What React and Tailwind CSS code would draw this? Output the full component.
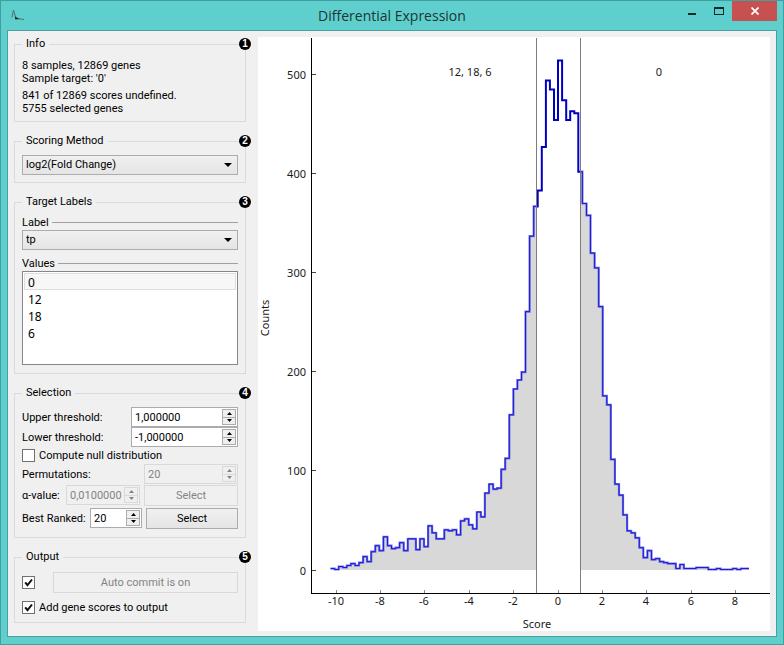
import { useState } from "react";

// Histogram counts, one entry per bin
const COUNTS = [
  2, 1, 4, 3, 5, 7, 5, 8, 14, 9, 19, 25, 20, 34, 25, 22, 23, 28, 20, 32, 32, 21, 32, 24, 45, 38, 32, 32, 41, 40, 41, 36,
  50, 52, 46, 42, 59, 54, 78, 87, 82, 83, 102, 113, 157, 183, 192, 200, 261, 337, 367, 383, 427, 494, 485, 454, 514, 474,
  454, 463, 461, 402, 370, 358, 320, 305, 266, 176, 167, 112, 87, 76, 56, 40, 38, 33, 23, 13, 20, 11, 12, 9, 8, 7, 7, 2,
  6, 2, 2, 2, 3, 3, 3, 1, 1, 2, 1, 1, 1, 2, 1, 2, 2,
];

const BIN_START = -10.28;
const BIN_WIDTH = 0.1832;

const scaleX = (v) => 300.5 + v * 22.17;
const scaleY = (v) => 533.5 - v * 0.992;

function stepPath() {
  return COUNTS.map((count, i) => {
    const left = scaleX(BIN_START + i * BIN_WIDTH).toFixed(1);
    const right = scaleX(BIN_START + (i + 1) * BIN_WIDTH).toFixed(1);
    const y = scaleY(count).toFixed(1);
    return `${i === 0 ? "M" : "L"}${left} ${y}L${right} ${y}`;
  }).join("");
}

function Histogram({ lower, upper }) {
  const line = stepPath();
  const first = scaleX(BIN_START);
  const last = scaleX(BIN_START + COUNTS.length * BIN_WIDTH);
  const area = `${line}L${last} 533L${first} 533Z`;
  const lowerX = Math.floor(scaleX(lower)) + 0.5;
  const upperX = Math.floor(scaleX(upper)) + 0.5;

  return (
    <svg viewBox="0 0 512 594" className="block h-full w-full" role="img" aria-label="Score histogram">
      <defs>
        <clipPath id="tails">
          <rect x="0" y="0" width={lowerX} height="594" />
          <rect x={upperX} y="0" width={512 - upperX} height="594" />
        </clipPath>
        <clipPath id="middle">
          <rect x={lowerX} y="0" width={upperX - lowerX} height="594" />
        </clipPath>
      </defs>

      <path d={area} fill="#d8d8d8" clipPath="url(#tails)" />
      <g fill="none" clipPath="url(#tails)">
        <path d={line} stroke="#7070f0" strokeWidth="2.2" />
        <path d={line} stroke="#1c1cc8" strokeWidth="1" />
      </g>
      <path d={line} fill="none" stroke="#0000c0" strokeWidth="2" clipPath="url(#middle)" />

      {/* Threshold markers */}
      <path d={`M${lowerX} 1V556M${upperX} 1V556`} stroke="#7d7d7d" />

      {/* Axes */}
      <path d="M53.5 1V557M53 556.5H512" stroke="#000" fill="none" />

      <g fontSize="11" fill="#1a1a1a">
        {[0, 100, 200, 300, 400, 500].map((v) => (
          <g key={v}>
            <path d={`M54 ${Math.round(scaleY(v)) - 0.5}h4`} stroke="#444" />
            <text x="48" y={Math.round(scaleY(v)) + 4} textAnchor="end">
              {v}
            </text>
          </g>
        ))}
        {[-10, -8, -6, -4, -2, 0, 2, 4, 6, 8].map((v) => (
          <g key={v}>
            <path d={`M${Math.round(scaleX(v)) - 0.5} 553v3`} stroke="#888" />
            <text x={Math.round(scaleX(v)) - 1} y="568" textAnchor="middle">
              {v}
            </text>
          </g>
        ))}
        <text x="212" y="39" textAnchor="middle">12, 18, 6</text>
        <text x="401" y="39" textAnchor="middle">0</text>
        <text x="279" y="591" textAnchor="middle">Score</text>
        <text transform="translate(11 281) rotate(-90)" textAnchor="middle">Counts</text>
      </g>
    </svg>
  );
}

function Group({ title, number, className, children }) {
  return (
    <div className="relative">
      <fieldset className={`min-w-0 border border-[#dadada] px-[7px] ${className}`}>
        <legend className="px-1 leading-4">{title}</legend>
        {children}
      </fieldset>
      <span className="absolute -right-[5px] top-[2px] flex size-3 items-center justify-center rounded-full bg-black font-['Liberation_Sans'] text-[10px] font-bold leading-3 text-white">
        {number}
      </span>
    </div>
  );
}

function Combo({ label, options }) {
  return (
    <div className="relative">
      <select
        aria-label={label}
        className="block h-5 w-full appearance-none border border-[#acacac] bg-linear-to-b from-[#f0f0f0] to-[#e5e5e5] pl-[3px] leading-4"
      >
        {options.map((o) => (
          <option key={o}>{o}</option>
        ))}
      </select>
      <svg viewBox="0 0 8 4" className="pointer-events-none absolute right-[6px] top-2 h-1 w-2">
        <path d="M0 0h8L4 4z" />
      </svg>
    </div>
  );
}

function SpinBox({ id, label, defaultValue, disabled, className }) {
  return (
    <div
      className={`flex h-5 border p-px ${
        disabled ? "border-[#d9d9d9] text-[#838383]" : "border-[#acacac] bg-white"
      } ${className}`}
    >
      <input
        id={id}
        aria-label={label}
        defaultValue={defaultValue}
        disabled={disabled}
        className="min-w-0 flex-1 bg-transparent pl-[2px] outline-none"
      />
      <div className="flex w-[14px] flex-col">
        <button
          type="button"
          aria-label="Increase"
          disabled={disabled}
          className={`flex flex-1 items-center justify-center border bg-[#efefef] ${disabled ? "border-[#d9d9d9]" : "border-[#acacac]"}`}
        >
          <svg viewBox="0 0 5 3" className="h-[3px] w-[5px] fill-current">
            <path d="M0 3h5L2.500 0z" />
          </svg>
        </button>
        <button
          type="button"
          aria-label="Decrease"
          disabled={disabled}
          className={`flex flex-1 items-center justify-center border border-t-0 bg-[#efefef] ${disabled ? "border-[#d9d9d9]" : "border-[#acacac]"}`}
        >
          <svg viewBox="0 0 5 3" className="h-[3px] w-[5px] fill-current">
            <path d="M0 0h5L2.500 3z" />
          </svg>
        </button>
      </div>
    </div>
  );
}

function CheckBox({ label, ariaLabel, defaultChecked }) {
  return (
    <label className="flex h-[13px] items-center gap-1 whitespace-nowrap">
      <span className="relative size-[13px] shrink-0">
        <input
          type="checkbox"
          aria-label={ariaLabel}
          defaultChecked={defaultChecked}
          className="peer block size-[13px] appearance-none border border-[#707070] bg-white"
        />
        <svg viewBox="0 0 13 13" className="pointer-events-none absolute inset-0 hidden size-[13px] peer-checked:block">
          <path d="M3.200 6.300L5.500 9.200L10 3.500" fill="none" stroke="#111" strokeWidth="2" />
        </svg>
      </span>
      {label}
    </label>
  );
}

function PushButton({ disabled, className, children }) {
  return (
    <button
      type="button"
      disabled={disabled}
      className={`h-[21px] border ${
        disabled ? "border-[#d9d9d9] text-[#838383]" : "border-[#acacac] bg-linear-to-b from-[#f0f0f0] to-[#e5e5e5]"
      } ${className}`}
    >
      {children}
    </button>
  );
}

function HeaderLine({ children }) {
  return (
    <div className="mb-px flex h-[13px] items-center gap-[3px] leading-[13px]">
      {children}
      <span className="h-px flex-1 bg-[#a0a0a0]" />
    </div>
  );
}

function TitleBar() {
  return (
    <header className="relative flex h-[29px] items-start justify-between">
      <svg viewBox="0 0 14 12" className="ml-1 mt-2 h-3 w-[14px]" fill="none">
        <path d="M1 8.500L2.500 1L4.500 8L6.500 9.500L13 10.500" stroke="#4b7372" />
        <path d="M3.800 7.500L4.300 10.500L8.500 10z" fill="#222" />
      </svg>
      <h1 className="pointer-events-none absolute inset-x-0 top-1 text-center font-['Open_Sans'] text-[14px] leading-[22px] text-[#1d3535]">
        Differential Expression
      </h1>
      <div className="flex">
        <button type="button" aria-label="Minimize" className="flex h-5 w-[27px] items-center justify-center">
          <svg viewBox="0 0 10 10" className="size-[10px]">
            <path d="M1 7h8v2H1z" fill="#0e2a2a" />
          </svg>
        </button>
        <button type="button" aria-label="Maximize" className="flex h-5 w-[27px] items-center justify-center">
          <svg viewBox="0 0 10 10" className="size-[10px]">
            <path d="M0 1h10v8H0zM1 3v5h8V3z" fill="#0e2a2a" fillRule="evenodd" />
          </svg>
        </button>
        <button type="button" aria-label="Close" className="flex h-5 w-[45px] items-center justify-center bg-[#c75050]">
          <svg viewBox="0 0 8 8" className="size-2">
            <path d="M0.500 0.500L7.500 7.500M7.500 0.500L0.500 7.500" stroke="#fff" strokeWidth="1.700" />
          </svg>
        </button>
      </div>
    </header>
  );
}

export default function App() {
  const [thresholds] = useState({ lower: -1, upper: 1 });

  return (
    <div className="flex min-h-screen flex-col border border-[#3fa09f] bg-[#5ecfcd] px-[6px] pb-[7px] text-[11px] leading-[13px] text-black">
      <TitleBar />

      <main className="flex flex-1 border border-[#4b9f9e] bg-[#f0f0f0] px-[6px] py-[5px]">
        <aside className="flex w-[232px] shrink-0 flex-col gap-[11px] font-['Roboto',sans-serif]">
          <Group title="Info" number="1" className="pb-[6px]">
            <div className="mt-[7px]">
              <p>8 samples, 12869 genes</p>
              <p>Sample target: '0'</p>
            </div>
            <div className="mt-1">
              <p>841 of 12869 scores undefined.</p>
              <p>5755 selected genes</p>
            </div>
          </Group>

          <Group title="Scoring Method" number="2" className="pb-[7px]">
            <div className="mt-[6px]">
              <Combo label="Scoring Method" options={["log2(Fold Change)"]} />
            </div>
          </Group>

          <Group title="Target Labels" number="3" className="pb-2">
            <div className="mt-[6px]">
              <HeaderLine>Label</HeaderLine>
              <Combo label="Label" options={["tp"]} />
            </div>
            <div className="mt-[7px]">
              <HeaderLine>Values</HeaderLine>
              <select
                size={5}
                aria-label="Values"
                className="block h-[94px] w-full appearance-none overflow-hidden border border-[#828790] bg-white p-px font-['Noto_Sans',sans-serif] text-[12px]"
              >
                {["0", "12", "18", "6"].map((v) => (
                  <option
                    key={v}
                    className="h-[17px] min-h-0 border border-transparent px-[3px] py-0 leading-[14px] first:border-[#dedede] first:bg-[#f7f7f7]"
                  >
                    {v}
                  </option>
                ))}
              </select>
            </div>
          </Group>

          <Group title="Selection" number="4" className="pb-2">
            <div className="mt-[6px] flex items-center justify-between">
              <label htmlFor="upper">Upper threshold:</label>
              <SpinBox id="upper" defaultValue="1,000000" className="w-[107px]" />
            </div>
            <div className="flex items-center justify-between">
              <label htmlFor="lower">Lower threshold:</label>
              <SpinBox id="lower" defaultValue="-1,000000" className="w-[107px]" />
            </div>
            <div className="my-[2px]">
              <CheckBox label="Compute null distribution" />
            </div>
            <div className="flex items-center justify-between">
              <label htmlFor="permutations">Permutations:</label>
              <SpinBox id="permutations" defaultValue="20" disabled className="w-[94px]" />
            </div>
            <div className="mt-px flex items-center justify-between">
              <label htmlFor="alpha">α-value:</label>
              <div className="flex gap-1">
                <SpinBox id="alpha" defaultValue="0,0100000" disabled className="w-[74px]" />
                <PushButton disabled className="w-[94px]">
                  Select
                </PushButton>
              </div>
            </div>
            <div className="mt-[2px] flex items-center justify-between">
              <label htmlFor="ranked">Best Ranked:</label>
              <div className="flex gap-1">
                <SpinBox id="ranked" defaultValue="20" className="w-[52px]" />
                <PushButton className="w-[92px]">Select</PushButton>
              </div>
            </div>
          </Group>

          <Group title="Output" number="5" className="pb-2">
            <div className="mt-[7px] flex items-center gap-[18px]">
              <CheckBox ariaLabel="Auto commit" defaultChecked />
              <PushButton disabled className="flex-1">
                Auto commit is on
              </PushButton>
            </div>
            <div className="mt-2">
              <CheckBox label="Add gene scores to output" defaultChecked />
            </div>
          </Group>
        </aside>

        <section className="ml-3 mt-px min-w-0 flex-1 self-start bg-white font-['Noto_Sans',sans-serif]">
          <Histogram lower={thresholds.lower} upper={thresholds.upper} />
        </section>
      </main>
    </div>
  );
}
